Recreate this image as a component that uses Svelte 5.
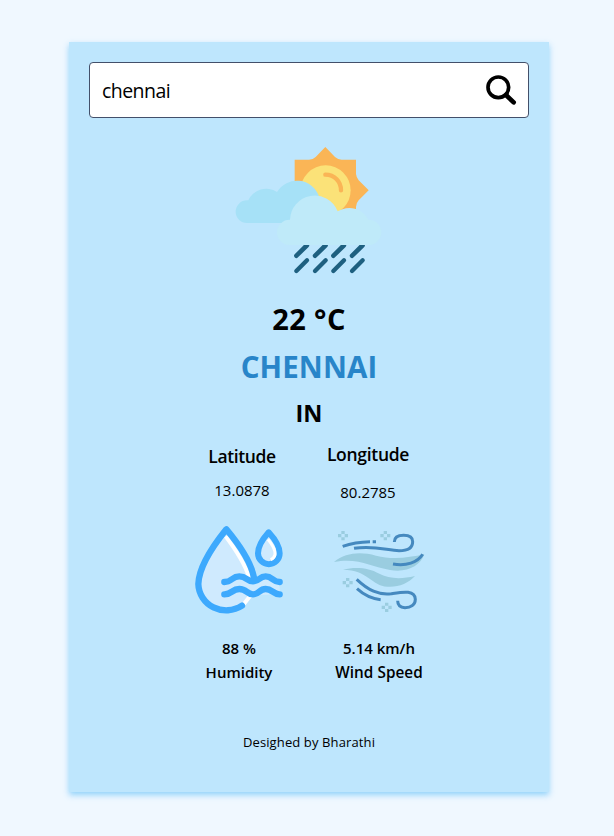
<script>
  const weather = {
    query: 'chennai', temp: '22 °C', city: 'CHENNAI', country: 'IN',
    lat: '13.0878', lon: '80.2785', humidity: '88 %', wind: '5.14 km/h'
  };
  const sparkles = [[54, 62], [181, 62], [68, 203], [185, 277]];
  const dashes = [214, 270, 325, 381];
</script>

<main class="page">
  <section class="card">
    <div class="search">
      <span class="query">{weather.query}</span>
      <svg class="glass" viewBox="0 0 102 102" aria-label="Search">
        <circle cx="40" cy="43" r="31" fill="none" stroke="#000" stroke-width="11" />
        <path d="M63 66L86 88" stroke="#000" stroke-width="14" stroke-linecap="round" />
      </svg>
    </div>

    <svg class="sky" viewBox="0 0 510 420" aria-hidden="true">
      <path fill="#fab556" d="M209 59H252Q264 59 272 51L301 21L330 51Q339 59 350 59H393V102Q394 112 401 121L431 151L401 181Q394 189 393 200V243H209Z" />
      <circle cx="302" cy="151" r="75" fill="#fbe278" />
      <path d="M301 104C329 104 348 125 348 151" fill="none" stroke="#fab556" stroke-width="13" stroke-linecap="round" />
      <path fill="#a6e1f7" d="M66 249A34 34 0 0 1 66 181H70A59 59 0 0 1 156 156A70 70 0 0 1 282 169L270 249Z" />
      <path fill="#bfeaf9" d="M193 315A38 38 0 0 1 195 239A74 74 0 0 1 338 214A64 64 0 0 1 430 239A38 38 0 0 1 432 315Z" />
      <g fill="#1e6080">
        {#each dashes as x}
          <path d="M{x + 22} 315H{x + 39}Q{x + 39} 319 {x + 36} 322L{x + 5} 352A6.500 6.500 0 0 1 {x - 5} 343L{x + 22} 316Z" />
          <path d="M{x} 393L{x + 32} 361" stroke="#1e6080" stroke-width="13" stroke-linecap="round" />
        {/each}
      </g>
    </svg>

    <div class="temp"><span>{weather.temp}</span></div>
    <div class="city"><span>{weather.city}</span></div>
    <div class="country"><span>{weather.country}</span></div>

    <div class="coords">
      <div class="coord">
        <div class="name lat">Latitude</div>
        <div class="value">{weather.lat}</div>
      </div>
      <div class="coord second">
        <div class="name lon">Longitude</div>
        <div class="value">{weather.lon}</div>
      </div>
    </div>

    <div class="metrics">
      <div class="metric">
        <svg viewBox="-3 0 330 330" aria-hidden="true">
          <path fill="#cfeafe" d="M124 42Q42 145 40 207C40 250 76 287 126 287C154 286 177 270 194 242L284 237V193L215 190Q203 138 124 42Z" />
          <path fill="none" stroke="#fff" stroke-width="12" d="M122 64Q176 136 192 186M176 268L196 242" />
          <path fill="#cfeafe" stroke="#3da9fd" stroke-width="18" stroke-linejoin="round" d="M251 52Q219 88 219 115A32.500 32.500 0 0 0 284 115Q284 88 251 52Z" />
          <path fill="none" stroke="#fff" stroke-width="9" d="M249 73Q272 101 270 119Q268 129 257 134" />
          <g fill="none" stroke="#3da9fd" stroke-width="19" stroke-linecap="round" stroke-linejoin="round">
            <path d="M207 188C198 142 160 86 124 43Q42 145 40 207A84 81 0 0 0 171 272" />
            <path d="M118 201C142 201 140 184 163 184S184 199 204 199S222 184 242 184S264 201 284 201" />
            <path d="M118 238C142 238 140 222 163 222S184 238 204 238S222 222 242 222S264 238 284 238" />
          </g>
        </svg>
        <div class="reading hum">{weather.humidity}</div>
        <div class="reading humidity">Humidity</div>
      </div>
      <div class="metric">
        <svg viewBox="-3 0 330 330" aria-hidden="true">
          <g fill="#9acde0">
            <path d="M27 141C62 113 105 109 153 122C205 136 253 127 298 118C286 154 244 174 195 165C138 155 99 127 27 141Z" />
            <path d="M54 164C94 154 135 160 160 175C194 192 227 193 270 183C251 205 217 218 187 215C140 213 128 164 54 164Z" />
            {#each sparkles as [x, y]}
              <path d="M{x - 5} {y - 14}h10v9h-10zM{x - 5} {y + 5}h10v9h-10zM{x - 15} {y - 5}h10v10h-10zM{x + 5} {y - 5}h10v10h-10z" />
            {/each}
          </g>
          <g fill="none" stroke="#4589bf" stroke-width="9">
            <path d="M53 94Q90 81 135 80M143 80H153M87 100C148 90 189 107 222 107C249 107 263 98 263 80C263 66 250 61 236 61C219 61 208 68 208 81" />
            <path d="M204 147C243 154 278 143 293 118M95 193C130 226 160 240 198 236C233 231 270 224 271 253C271 270 257 278 240 278C226 277 218 271 218 257M96 221C120 243 139 251 167 254" />
          </g>
        </svg>
        <div class="reading speed">{weather.wind}</div>
        <div class="reading wind">Wind Speed</div>
      </div>
    </div>

    <footer><span>Desighed by Bharathi</span></footer>
  </section>
</main>

<style>
  :global(body) { margin: 0; background: #f0f8ff; }
  .page {
    box-sizing: border-box; height: 836px; padding: 42px 65px 0 69px;
    font-family: "Open Sans", "Noto Sans", sans-serif; color: #000;
  }
  .card {
    box-sizing: border-box; width: 480px; height: 750px; padding: 20px;
    display: flex; flex-direction: column; background: #bee6fd;
    box-shadow: 0 3px 6px rgba(135, 206, 250, .9);
  }
  .search {
    box-sizing: border-box; height: 56px; flex: none; display: flex; align-items: center;
    justify-content: space-between; padding: 0 9px 0 12px; background: #fff;
    border: 1px solid #43506a; border-radius: 4px;
  }
  .query { font-size: 19.500px; letter-spacing: -.55px; }
  .glass { width: 34px; height: 34px; }
  .sky { width: 170px; height: 140px; margin: 22px 0 0 136px; flex: none; }
  .temp, .city, .country { text-align: center; font-weight: 700; white-space: pre; flex: none; }
  .temp { height: 40px; line-height: 40px; margin-top: 19px; font-size: 29px; letter-spacing: .4px; }
  .city { height: 40px; line-height: 40px; margin-top: 8px; font-size: 29.500px; letter-spacing: .1px; color: #2885c9; }
  .country { height: 34px; line-height: 34px; margin-top: 9px; font-size: 23.500px; }
  .coords { display: flex; margin: 12px 0 0 90px; height: 67px; flex: none; }
  .coord { width: 126px; text-align: center; padding-top: 2px; }
  .coord.second { padding-top: 0; }
  .name { font-size: 17.500px; line-height: 24px; font-weight: 600; letter-spacing: -.3px; }
  .lat { letter-spacing: -.4px; }
  .value { font-size: 15px; line-height: 22px; margin-top: 11px; }
  .second .value { margin-top: 15px; }
  .metrics { display: flex; margin: 6px 0 0 80px; flex: none; }
  .metric { width: 140px; display: flex; flex-direction: column; align-items: center; }
  .metric svg { width: 110px; height: 110px; margin-bottom: 11px; }
  .reading { font-size: 15px; line-height: 24px; font-weight: 600; white-space: nowrap; }
  .wind { font-size: 15.300px; letter-spacing: .05px; }
  footer { text-align: center; font-size: 13px; letter-spacing: .12px; line-height: 20px; margin-top: 48px; }
</style>
